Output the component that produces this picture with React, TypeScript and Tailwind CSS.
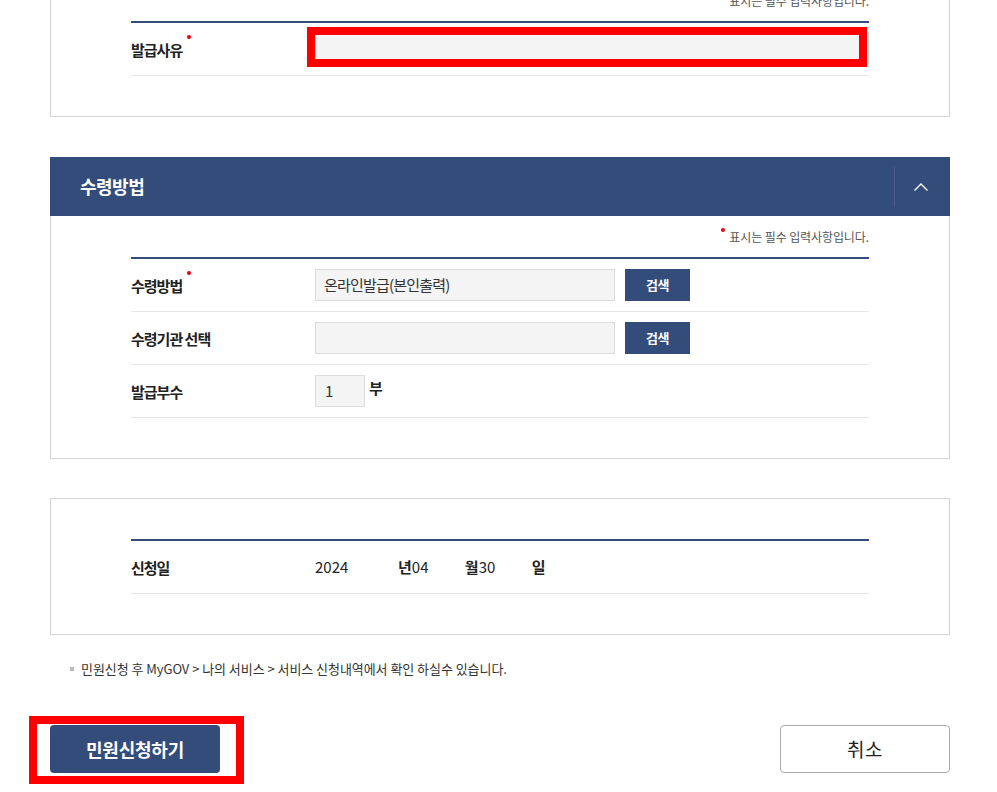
import React from "react";

const F = { fontFamily: '"Noto Sans CJK KR", "Noto Sans", sans-serif' };

function Dot() {
  return <span className="absolute right-[-9px] top-[-4px] w-[4px] h-[4px] rounded-full bg-[#e60012]" />;
}

function Label({ text, req }: { text: string; req?: boolean }) {
  return (
    <div className="w-[184px] shrink-0">
      <span className="relative text-[15px] font-bold text-[#222] tracking-[-1px] whitespace-pre">
        {text}
        {req && <Dot />}
      </span>
    </div>
  );
}

function Notice() {
  return (
    <div className="pt-[11px] mb-[10px] h-[31px] flex justify-end items-start">
      <span className="relative text-[12px] leading-[20px] text-[#555] tracking-[-0.1px]">
        <span className="absolute left-[-8px] top-[1px] w-[4px] h-[4px] rounded-full bg-[#e60012]" />
        표시는 필수 입력사항입니다.
      </span>
    </div>
  );
}

function Row({ children }: { children: React.ReactNode }) {
  return <div className="flex items-center h-[53px] border-b border-[#e6e6e6]">{children}</div>;
}

function SearchBtn() {
  return (
    <button className="ml-[10px] w-[65px] h-[32px] bg-[#344c79] text-white text-[13px] font-bold tracking-[-0.5px]">
      검색
    </button>
  );
}

export default function App() {
  return (
    <div style={F} className="w-[997px] h-[792px] overflow-hidden bg-white">
      <div className="ml-[50px] w-[900px]">
        {/* Box 1 */}
        <div className="mt-[-21px] border border-[#d5d5d5] px-[80px] pb-[40px]">
          <Notice />
          <div className="h-[2px] bg-[#344c79]" />
          <Row>
            <Label text="발급사유" req />
            <div className="relative flex-1">
              <div className="h-[32px] bg-[#f4f4f4] border border-[#dcdcdc]" />
              <div className="absolute left-[-8px] top-[-6px] w-[560px] h-[40px] border-[8px] border-[#ff0000]" />
            </div>
          </Row>
        </div>

        {/* Box 2 */}
        <div className="mt-[40px]">
          <div className="h-[59px] bg-[#344c79] flex items-center">
            <div className="flex-1 pl-[30px] text-white text-[18px] font-bold tracking-[-0.5px]">수령방법</div>
            <div className="w-[1px] h-[40px] bg-[#4d5b88]" />
            <div className="w-[52px] flex items-center justify-center">
              <svg width="16" height="10" viewBox="0 0 16 10">
                <polyline points="1.5,8.5 8,2 14.5,8.5" fill="none" stroke="white" strokeWidth="1.4" />
              </svg>
            </div>
            <div className="w-[3px]" />
          </div>
          <div className="border-x border-b border-[#d5d5d5] px-[80px] pb-[40px]">
            <Notice />
            <div className="h-[2px] bg-[#344c79]" />
            <Row>
              <Label text="수령방법" req />
              <div className="w-[300px] h-[32px] bg-[#f4f4f4] border border-[#dcdcdc] flex items-center px-[8px] text-[15px] text-[#333] tracking-[-0.8px]">
                온라인발급(본인출력)
              </div>
              <SearchBtn />
            </Row>
            <Row>
              <Label text="수령기관 선택" />
              <div className="w-[300px] h-[32px] bg-[#f4f4f4] border border-[#dcdcdc]" />
              <SearchBtn />
            </Row>
            <Row>
              <Label text="발급부수" />
              <div className="w-[50px] h-[32px] bg-[#f4f4f4] border border-[#dcdcdc] flex items-center px-[9px] text-[15px] text-[#333]">
                1
              </div>
              <span className="ml-[4px] mb-[6px] text-[15px] font-bold text-[#222]">부</span>
            </Row>
          </div>
        </div>

        {/* Box 3 */}
        <div className="mt-[39px] border border-[#d5d5d5] px-[80px] pt-[40px] pb-[40px]">
          <div className="h-[2px] bg-[#344c79]" />
          <Row>
            <Label text="신청일" />
            <div className="flex items-center text-[15px] text-[#222]">
              <span className="w-[83px]">2024</span>
              <span className="font-bold">년</span>
              <span className="w-[53px]">04</span>
              <span className="font-bold">월</span>
              <span className="w-[53px]">30</span>
              <span className="font-bold">일</span>
            </div>
          </Row>
        </div>

        {/* Note */}
        <div className="mt-[24px] pl-[20px] flex items-center h-[20px] text-[13px] text-[#333] tracking-[-0.05px]">
          <span className="w-[4px] h-[4px] bg-[#bbb] mr-[7px]" />
          민원신청 후 MyGOV &gt; 나의 서비스 &gt; 서비스 신청내역에서 확인 하실수 있습니다.
        </div>

        {/* Buttons */}
        <div className="mt-[46px] flex justify-between">
          <div className="relative">
            <button className="w-[170px] h-[48px] rounded-[4px] bg-[#344c79] text-white text-[18px] font-bold tracking-[-0.2px]">
              민원신청하기
            </button>
            <div className="absolute left-[-21px] top-[-9px] w-[215px] h-[68px] border-[8px] border-[#ff0000]" />
          </div>
          <button className="w-[170px] h-[48px] rounded-[4px] bg-white border border-[#aaa] text-[#222] text-[19px] tracking-[0.5px]">
            취소
          </button>
        </div>
      </div>
    </div>
  );
}
